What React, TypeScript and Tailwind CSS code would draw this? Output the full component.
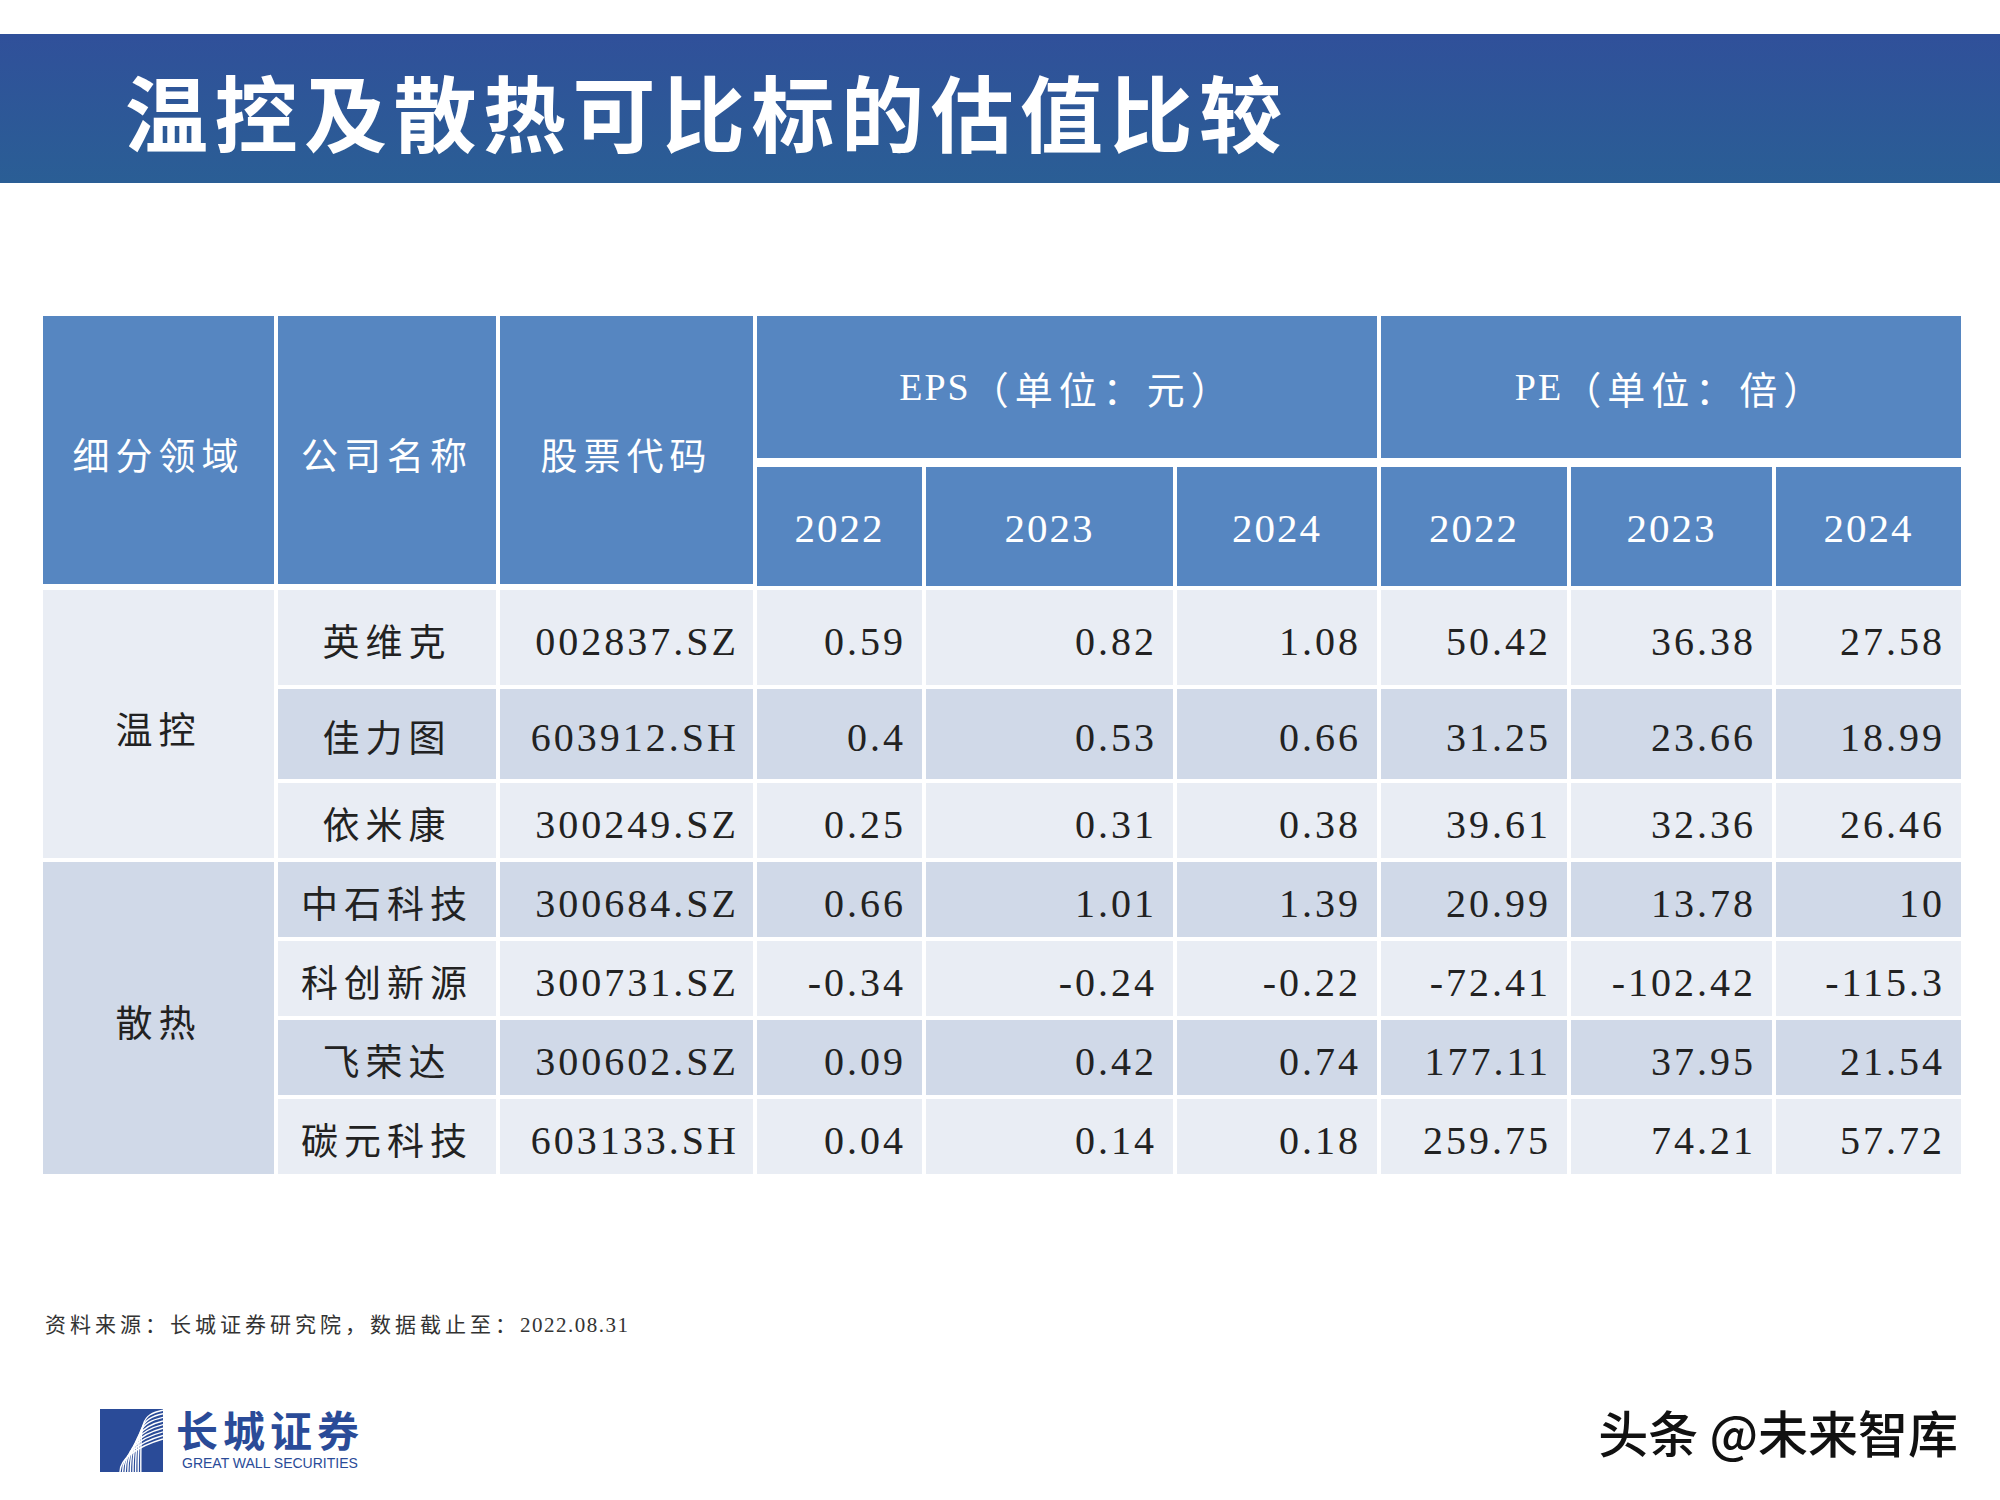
import React from 'react';

const cjk = "font-['Noto_Sans_CJK_SC',sans-serif]";
const serif = "font-['Liberation_Serif','Noto_Sans_CJK_SC',serif]";
const sans = "font-['Liberation_Sans',sans-serif]";

const rows = [
  { name: '英维克', code: '002837.SZ', v: ['0.59', '0.82', '1.08', '50.42', '36.38', '27.58'], dark: false },
  { name: '佳力图', code: '603912.SH', v: ['0.4', '0.53', '0.66', '31.25', '23.66', '18.99'], dark: true },
  { name: '依米康', code: '300249.SZ', v: ['0.25', '0.31', '0.38', '39.61', '32.36', '26.46'], dark: false },
  { name: '中石科技', code: '300684.SZ', v: ['0.66', '1.01', '1.39', '20.99', '13.78', '10'], dark: true },
  { name: '科创新源', code: '300731.SZ', v: ['-0.34', '-0.24', '-0.22', '-72.41', '-102.42', '-115.3'], dark: false },
  { name: '飞荣达', code: '300602.SZ', v: ['0.09', '0.42', '0.74', '177.11', '37.95', '21.54'], dark: true },
  { name: '碳元科技', code: '603133.SH', v: ['0.04', '0.14', '0.18', '259.75', '74.21', '57.72'], dark: false },
];

const years = ['2022', '2023', '2024', '2022', '2023', '2024'];

const Logo = () => (
  <svg width="63" height="63" viewBox="0 0 63 63">
    <rect width="63" height="63" fill="#2a4b98" />
    {[0, 1, 2, 3, 4, 5, 6, 7, 8].map((i) => (
      <path
        key={i}
        d={`M ${20 + i * 2.6} 63 C ${20 + i * 2.6} ${50 - i * 4.5} ${36 + i * 0.5} ${38 - i * 4} 63 ${30 - i * 3.6}`}
        stroke="#fff"
        strokeWidth="1.4"
        fill="none"
      />
    ))}
  </svg>
);

export default function App() {
  return (
    <div className="w-[2000px] h-[1500px] bg-white overflow-hidden">
      <div className="pt-[34px]">
        <div className="h-[149px] bg-gradient-to-b from-[#30509a] to-[#2a5e95] flex items-center pl-[125px]">
          <h1 className={`${cjk} text-white text-[83px] font-bold tracking-[6.5px] leading-none pt-[4px]`}>
            温控及散热可比标的估值比较
          </h1>
        </div>
      </div>

      <div className="mt-[133px] ml-[43px] grid grid-cols-[231px_218px_253px_165px_247px_200px_186px_201px_185px] grid-rows-[142px_124px_95px_90px_75px_75px_75px_75px_75px] gap-[4px] w-fit">
        {['细分领域', '公司名称', '股票代码'].map((h) => (
          <div
            key={h}
            className={`${cjk} row-span-2 bg-[#5686c1] text-white text-[37px] tracking-[6px] flex items-center justify-center pt-[10px] mb-[2px]`}
          >
            {h}
          </div>
        ))}
        <div className="col-span-3 bg-[#5686c1] text-white flex items-center justify-center text-[38px]">
          <span className={`${serif} tracking-[2px]`}>EPS</span>
          <span className={`${cjk} tracking-[6px]`}>（单位：元）</span>
        </div>
        <div className="col-span-3 bg-[#5686c1] text-white flex items-center justify-center text-[38px]">
          <span className={`${serif} tracking-[2px]`}>PE</span>
          <span className={`${cjk} tracking-[6px]`}>（单位：倍）</span>
        </div>
        {years.map((y, i) => (
          <div
            key={i}
            className={`${serif} mt-[5px] bg-[#5686c1] text-white text-[41px] tracking-[2px] flex items-center justify-center pt-[4px]`}
          >
            {y}
          </div>
        ))}

        {rows.map((r, ri) => {
          const bg = r.dark ? 'bg-[#d0d9e8]' : 'bg-[#e9edf4]';
          return (
            <React.Fragment key={ri}>
              {ri === 0 && (
                <div className={`${cjk} row-span-3 bg-[#e9edf4] text-[#222] text-[37px] tracking-[6px] flex items-center justify-center pt-[10px]`}>
                  温控
                </div>
              )}
              {ri === 3 && (
                <div className={`${cjk} row-span-4 bg-[#d0d9e8] text-[#222] text-[37px] tracking-[6px] flex items-center justify-center pt-[8px]`}>
                  散热
                </div>
              )}
              <div className={`${cjk} ${bg} text-[#222] text-[37px] tracking-[6px] flex items-center justify-center pt-[6px]`}>
                {r.name}
              </div>
              <div className={`${serif} ${bg} text-[#222] text-[40px] tracking-[3px] flex items-center justify-end pr-[14px] pt-[8px]`}>
                {r.code}
              </div>
              {r.v.map((v, vi) => (
                <div
                  key={vi}
                  className={`${serif} ${bg} text-[#222] text-[40px] tracking-[3px] flex items-center justify-end pr-[16px] pt-[8px]`}
                >
                  {v}
                </div>
              ))}
            </React.Fragment>
          );
        })}
      </div>

      <div className="mt-[137px] pl-[45px] text-[21px] leading-[24px] text-[#333]">
        <span className={`${cjk} tracking-[4px]`}>资料来源：长城证券研究院，数据截止至：</span>
        <span className={`${serif} tracking-[1.5px]`}>2022.08.31</span>
      </div>

      <div className="mt-[72px] pl-[100px] pr-[42px] flex items-start justify-between">
        <div className="flex items-start gap-[13px]">
          <Logo />
          <div className="flex flex-col text-[#2a4b98]">
            <span className={`${cjk} text-[42px] font-bold leading-[44px] tracking-[5px] -mt-[2px]`}>
              长城证券
            </span>
            <span className={`${sans} text-[14px] leading-[16px] mt-[4px] ml-[6px]`}>
              GREAT WALL SECURITIES
            </span>
          </div>
        </div>
        <span className={`${cjk} text-[50px] font-medium leading-[60px] text-[#111] -mt-[8px]`}>
          头条 @未来智库
        </span>
      </div>
    </div>
  );
}
